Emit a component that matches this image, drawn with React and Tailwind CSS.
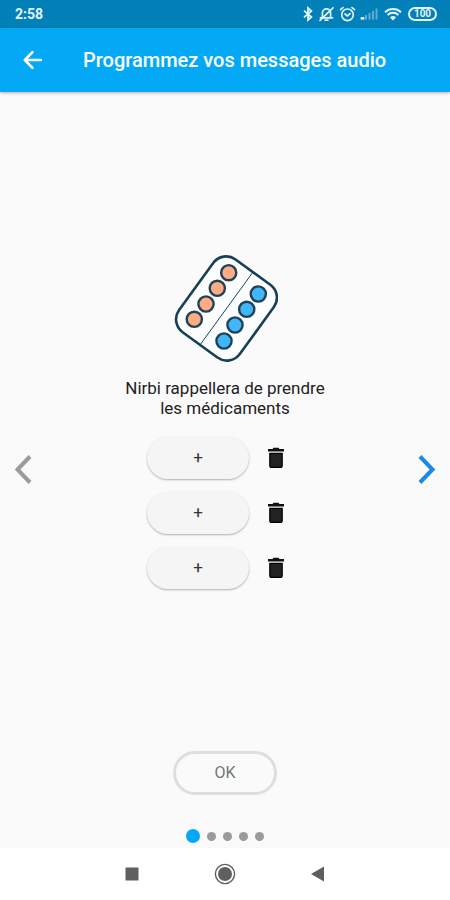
import React, { useState } from "react";

const PAGE_COUNT = 5;

const ORANGE_PILLS = [
  [54.7, 19.7],
  [43.3, 35.3],
  [32, 51],
  [20.3, 66.3],
];

const BLUE_PILLS = [
  [84.3, 41],
  [72.7, 56.3],
  [61, 72],
  [50, 88],
];

/* -------------------- Icons -------------------- */
const BluetoothIcon = () => (
  <svg width="12" height="16" viewBox="0 0 12 16" fill="none" stroke="currentColor" strokeWidth="1.8" aria-hidden="true">
    <path d="M2 4.6 9.4 11 6 14V2l3.4 3L2 11.4" />
  </svg>
);

const MutedBellIcon = () => (
  <svg
    width="17"
    height="16"
    viewBox="0 0 17 16"
    fill="none"
    stroke="currentColor"
    strokeWidth="1.7"
    strokeLinecap="round"
    aria-hidden="true"
  >
    <path d="M2.4 11.8h12.2M4.4 11.4V7a4.1 4.1 0 0 1 8.2 0v4.4M7.2 14.2h2.6" />
    <path d="M2 14.4 15 1.8" />
  </svg>
);

const AlarmIcon = () => (
  <svg
    width="17"
    height="16"
    viewBox="0 0 17 16"
    fill="none"
    stroke="currentColor"
    strokeWidth="1.7"
    strokeLinecap="round"
    aria-hidden="true"
  >
    <circle cx="8.5" cy="8.8" r="5.8" />
    <path d="M1.4 3.6 4 1.6M15.6 3.6 13 1.6M6 8l2.3 2 2.8-2.4" />
  </svg>
);

const SignalIcon = () => (
  <svg width="18" height="14" viewBox="0 0 18 14" fill="currentColor" aria-hidden="true">
    <rect x="0.5" y="10" width="4" height="2.8" rx="1.2" />
    <g opacity="0.4">
      <rect x="5" y="8" width="2" height="4.5" />
      <rect x="8.5" y="6" width="2" height="6.5" />
      <rect x="12" y="4" width="2" height="8.5" />
      <rect x="15.5" y="1.5" width="2" height="11" />
    </g>
  </svg>
);

const WifiIcon = () => (
  <svg width="18" height="14" viewBox="0 0 18 14" fill="none" stroke="currentColor" strokeWidth="2" aria-hidden="true">
    <path d="M1 5.2a11.6 11.6 0 0 1 16 0" />
    <path d="M3.6 8a7.8 7.8 0 0 1 10.8 0" />
    <path d="M6 10.4a4.4 4.4 0 0 1 6 0L9 13.4z" fill="currentColor" stroke="none" />
  </svg>
);

const BackIcon = () => (
  <svg
    width="24"
    height="24"
    viewBox="0 0 24 24"
    fill="none"
    stroke="currentColor"
    strokeWidth="2.6"
    strokeLinecap="round"
    strokeLinejoin="round"
    aria-hidden="true"
  >
    <path d="M20 12H4M11.5 4.2 3.8 12l7.7 7.8" />
  </svg>
);

const Chevron = ({ right = false }) => (
  <svg width="18" height="30" viewBox="0 0 18 30" fill="none" stroke="currentColor" strokeWidth="4" aria-hidden="true">
    <path d={right ? "M2 1.5 14.5 14.5 2 27.5" : "M16 1.5 3.5 14.5 16 27.5"} />
  </svg>
);

const TrashIcon = () => (
  <svg width="18" height="22" viewBox="0 0 18 22" aria-hidden="true">
    <path d="M1 2h4.5l1-1.2h5l1 1.2H17v2.4H1z" fill="#111" />
    <path d="M2.8 6.4h12.4v12a2 2 0 0 1-2 2H4.8a2 2 0 0 1-2-2z" stroke="#000" strokeWidth="1.2" fill="#222" />
  </svg>
);

const BlisterPack = () => (
  <svg width="106" height="110" viewBox="-2 0 106 110" role="img" aria-label="Médicaments">
    <g transform="rotate(36 52.5 55.5)" stroke="#174054">
      <rect x="15" y="10.5" width="75" height="90" rx="16" fill="#fcfdfe" strokeWidth="2.6" />
      <path d="M52.5 10.5v90" strokeWidth="0.9" />
    </g>
    <g stroke="#1f4256" strokeWidth="2.4">
      {ORANGE_PILLS.map(([x, y]) => (
        <circle key={x} cx={x} cy={y} r="7.6" fill="#ffab85" />
      ))}
      {BLUE_PILLS.map(([x, y]) => (
        <circle key={x} cx={x} cy={y} r="7.6" fill="#40b7fb" />
      ))}
    </g>
  </svg>
);

/* -------------------- Bars -------------------- */
const StatusBar = () => (
  <div className="flex h-7 items-center justify-between bg-[#0280b8] pr-[13px] pl-[15px] text-[#e3f3fb]">
    <span className="text-[14px] font-bold">2:58</span>
    <div className="flex items-center gap-1">
      <BluetoothIcon />
      <MutedBellIcon />
      <AlarmIcon />
      <span className="flex items-center gap-[6px]">
        <SignalIcon />
        <WifiIcon />
        <span className="flex h-[14px] w-[29px] items-center justify-center rounded-full border-2 border-current text-[10px] leading-none font-bold">
          100
        </span>
      </span>
    </div>
  </div>
);

const Header = () => (
  <header className="z-10 flex h-16 items-center bg-[#03a9f4] pl-[21px] text-white shadow-[0_1px_3px_rgba(0,0,0,0.3)]">
    <button type="button" aria-label="Retour">
      <BackIcon />
    </button>
    <h1 className="ml-[38px] text-[20px] leading-7 font-medium whitespace-nowrap">
      Programmez vos messages audio
    </h1>
  </header>
);

const SystemNav = () => (
  <nav className="flex h-[52px] items-center justify-center gap-[75px] bg-white text-[#5f5f5f]">
    <button type="button" aria-label="Applications récentes">
      <svg width="14" height="14" viewBox="0 0 14 14" fill="currentColor">
        <rect x="0.5" y="0.5" width="13" height="13" />
      </svg>
    </button>
    <button type="button" aria-label="Accueil">
      <svg width="22" height="22" viewBox="0 0 22 22">
        <circle cx="11" cy="11" r="9.6" fill="none" stroke="currentColor" strokeWidth="1.4" />
        <circle cx="11" cy="11" r="7" fill="currentColor" />
      </svg>
    </button>
    <button type="button" aria-label="Précédent">
      <svg width="14" height="16" viewBox="0 0 14 16" fill="currentColor">
        <path d="M0 8 13 0.5v15z" />
      </svg>
    </button>
  </nav>
);

/* -------------------- Message row -------------------- */
const MessageRow = () => (
  <li className="flex items-center">
    <button
      type="button"
      aria-label="Ajouter un message"
      className="h-[42px] w-[102px] rounded-full bg-[#f5f5f5] text-[17px] text-[#333] shadow-[0_1px_2px_rgba(0,0,0,0.3)]"
    >
      +
    </button>
    <button type="button" aria-label="Supprimer le message" className="flex w-[54px] justify-center">
      <TrashIcon />
    </button>
  </li>
);

export default function App() {
  const [page, setPage] = useState(0);

  const go = (step) =>
    setPage((p) => Math.min(PAGE_COUNT - 1, Math.max(0, p + step)));

  return (
    <div className="flex min-h-screen flex-col bg-[#fafafa] font-['Roboto',sans-serif]">
      <StatusBar />
      <Header />

      <main className="flex flex-1 justify-between px-[14px]">
        <button
          type="button"
          aria-label="Page précédente"
          onClick={() => go(-1)}
          className="self-center text-[#9b9b9b]"
        >
          <Chevron />
        </button>

        <div className="flex flex-col items-center pt-[161px] pb-1">
          <BlisterPack />
          <p className="mt-[15px] text-center text-[17px] leading-5 text-[#222]">
            Nirbi rappellera de prendre
            <br />
            les médicaments
          </p>

          <ul className="mt-[19px] flex flex-col gap-[13px]">
            <MessageRow />
            <MessageRow />
            <MessageRow />
          </ul>

          <button
            type="button"
            className="mt-auto h-11 w-[104px] rounded-full border-3 border-[#dedede] text-[16px] text-[#757575]"
          >
            OK
          </button>

          <div className="mt-[33px] flex h-4 items-center gap-[7px]">
            {Array.from({ length: PAGE_COUNT }, (_, i) => (
              <span
                key={i}
                className={
                  i === page
                    ? "size-[14px] rounded-full bg-[#03a9f4]"
                    : "size-[9px] rounded-full bg-[#9b9b9b]"
                }
              />
            ))}
          </div>
        </div>

        <button
          type="button"
          aria-label="Page suivante"
          onClick={() => go(1)}
          className="self-center text-[#1e88e5]"
        >
          <Chevron right />
        </button>
      </main>

      <SystemNav />
    </div>
  );
}
